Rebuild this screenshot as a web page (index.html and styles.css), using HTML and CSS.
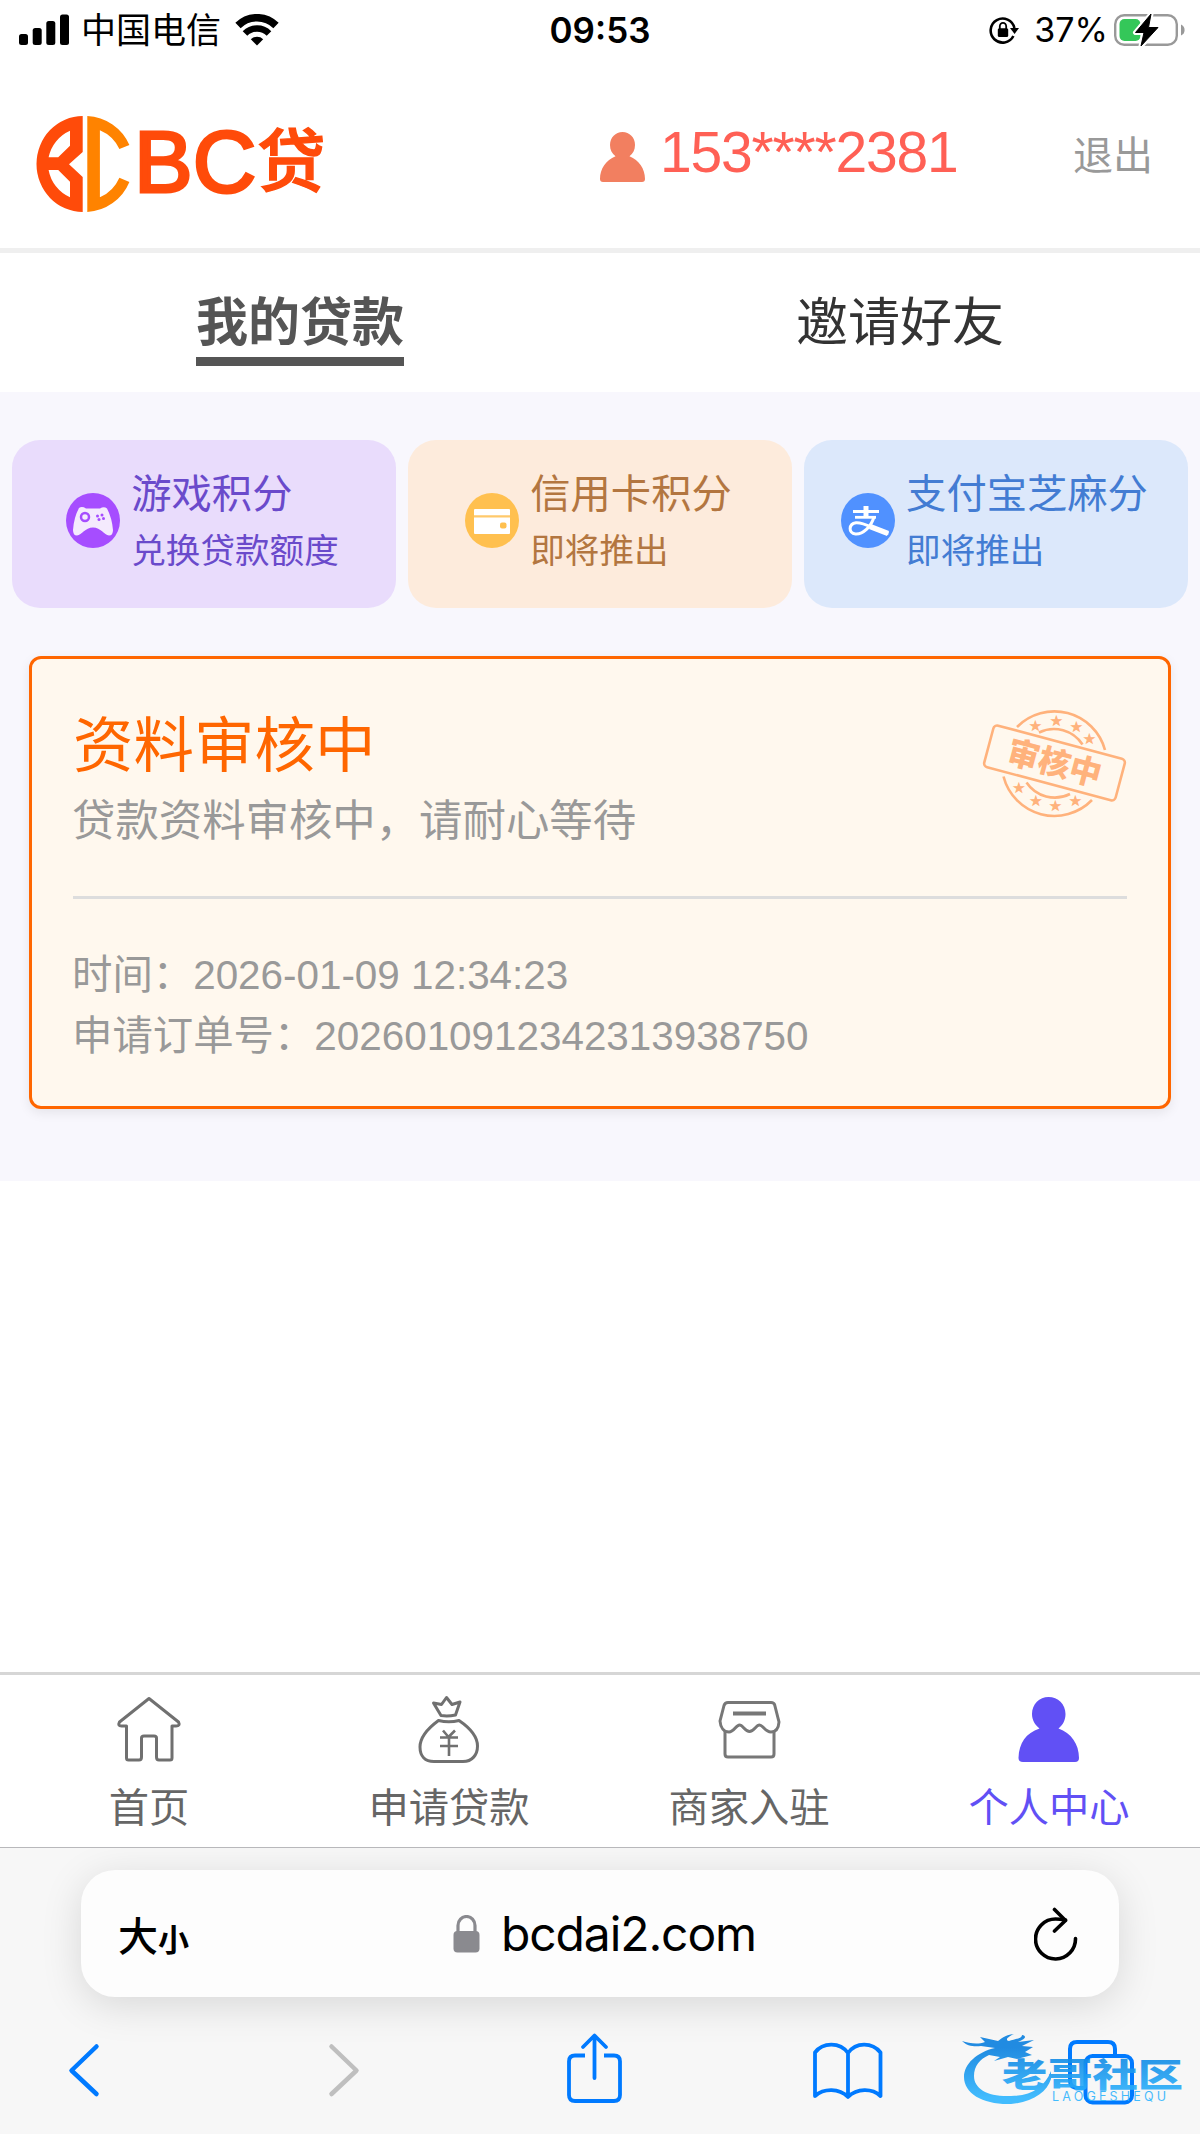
FILE: index.html
```html
<!DOCTYPE html>
<html lang="zh-CN">
<head>
    <meta charset="UTF-8">
    <meta name="viewport" content="width=device-width, initial-scale=1.0">
    <title>BC贷 - 个人中心</title>
    <link rel="stylesheet" href="styles.css">
</head>
<body>

    <!-- 状态栏 -->
    <div class="status">
        <div class="status-left">
            <svg width="50" height="32" viewBox="0 0 50 32">
                <rect x="0" y="20" width="9" height="11" rx="2.5"/>
                <rect x="13.7" y="14" width="9" height="17" rx="2.5"/>
                <rect x="27.3" y="7" width="9" height="24" rx="2.5"/>
                <rect x="41" y="0.5" width="9" height="30.5" rx="2.5"/>
            </svg>
            <span class="carrier">中国电信</span>
            <svg class="wifi" width="44" height="32" viewBox="0 0 44 32">
                <path d="M3 11.5A27 27 0 0 1 41 11.5" fill="none" stroke="#000" stroke-width="7.5"/>
                <path d="M10 19.5A17 17 0 0 1 34 19.5" fill="none" stroke="#000" stroke-width="6.5"/>
                <path d="M22 31.5L15.8 25.3A9 9 0 0 1 28.2 25.3Z"/>
            </svg>
        </div>
        <div class="clock">09:53</div>
        <div class="status-right">
            <svg width="30" height="28" viewBox="0 0 30 28">
                <path d="M24.4 20A12 12 0 1 1 25.4 12" fill="none" stroke="#000" stroke-width="2.6"/>
                <path d="M21 12H30L25.6 18Z"/>
                <rect x="8.8" y="12.3" width="10.4" height="8.7" rx="1.5"/>
                <path d="M10.8 13V10.5a3.2 3.6 0 0 1 6.4 0V13" fill="none" stroke="#000" stroke-width="1.8"/>
            </svg>
            <span class="percent">37%</span>
            <svg width="72" height="36" viewBox="0 0 72 36">
                <rect x="1.2" y="3.2" width="61.6" height="29.6" rx="9" fill="none" stroke="#999" stroke-width="2.4"/>
                <path d="M67 12.5q3.6 1.5 3.6 5.5t-3.6 5.5z" fill="#999"/>
                <rect x="5.5" y="7" width="21" height="22" rx="5" fill="#34c759"/>
                <path d="M37 2L21.5 20.5H30L27 34L44 15.5H34.5Z" stroke="#fff" stroke-width="5" stroke-linejoin="round"/>
                <path d="M37 2L21.5 20.5H30L27 34L44 15.5H34.5Z" stroke="#000" stroke-width="1" stroke-linejoin="round"/>
            </svg>
        </div>
    </div>

    <!-- 顶部 -->
    <div class="header">
        <svg class="logo" width="95" height="98" viewBox="36 115 95 98">
            <path fill="#ff4b0a" fill-rule="evenodd" d="M82.7 116V152L69 164.3L82.7 177V212A46.2 48 0 0 1 82.7 116ZM70 130.7A37 37 0 0 0 48.6 157.3H58.2L70 145.7ZM48.6 170A37 37 0 0 0 70 197.3V181.7L58.2 170Z"/>
            <path fill="#ff8300" d="M87.3 116A48.5 48.5 0 0 1 129.4 145L119.4 149A38 38 0 0 0 99.9 130.3V197.3A38 38 0 0 0 119.4 177.7L129.4 182A48.5 48.5 0 0 1 87.3 212Z"/>
        </svg>
        <div class="brand">BC<span>贷</span></div>
        <svg class="user-icon" width="45" height="50" viewBox="0 0 45 50">
            <path fill="#f27f60" d="M22.5 0C29.500 0 35 5.500 35 13C35 18 33 21.500 29.500 24.300C39 28 45 37 45 47Q45 50 42 50H3Q0 50 0 47C0 37 6 28 15.500 24.300C12 21.500 10 18 10 13C10 5.500 15.500 0 22.500 0Z"/>
        </svg>
        <div class="phone">153****2381</div>
        <div class="logout">退出</div>
    </div>

    <div class="tabs">
        <div class="tab"><span class="active">我的贷款</span></div>
        <div class="tab"><span>邀请好友</span></div>
    </div>

    <div class="main">
        <!-- 积分 -->
        <div class="scores">
            <div class="score game">
                <svg width="54" height="55" viewBox="0 0 54 55">
                    <ellipse cx="27" cy="27.500" rx="27" ry="27.500" fill="#a64dff"/>
                    <path fill="#f4eafd" d="M13 15Q16 13 20 15.500H34Q38 13 41 15.500Q46 25 47 37Q47 42.500 43 42.500C38 42 35 34.500 27 34.500S16 42 11 42.500Q7 42.500 7 37Q8 24 13 15Z"/>
                    <circle cx="19" cy="24" r="4" fill="none" stroke="#a64dff" stroke-width="2.500"/>
                    <g fill="#a64dff"><circle cx="31.500" cy="23" r="1.500"/><circle cx="36" cy="22" r="1.500"/><circle cx="33" cy="26.500" r="1.500"/><circle cx="37.500" cy="25.500" r="1.500"/></g>
                </svg>
                <div><p class="name">游戏积分</p><p class="desc">兑换贷款额度</p></div>
            </div>
            <div class="score credit">
                <svg width="54" height="55" viewBox="0 0 54 55">
                    <ellipse cx="27" cy="27.500" rx="27" ry="27.500" fill="#ffc04f"/>
                    <rect x="9" y="16" width="36" height="25" rx="1" fill="#fff"/>
                    <path d="M9 23.300H45" stroke="#ffc96b" stroke-width="2.200"/>
                    <rect x="35" y="29.500" width="6.500" height="6" rx="2" fill="#ffc04f"/>
                </svg>
                <div><p class="name">信用卡积分</p><p class="desc">即将推出</p></div>
            </div>
            <div class="score alipay">
                <svg width="54" height="55" viewBox="0 0 54 55">
                    <ellipse cx="27" cy="27.500" rx="27" ry="27.500" fill="#5091ff"/>
                    <g fill="none" stroke="#fff">
                        <path d="M12 18.500H38" stroke-width="3"/>
                        <path d="M25 13V24" stroke-width="5"/>
                        <path d="M14 24.300H35" stroke-width="2.800"/>
                        <path d="M33 24C30 34 22 41.500 14.500 41C7 40 7.500 31 15 29.800C24 29 33 37 47.500 40.500" stroke-width="3"/>
                        <path d="M29 33.500L47 40.500" stroke-width="5.500"/>
                    </g>
                </svg>
                <div><p class="name">支付宝芝麻分</p><p class="desc">即将推出</p></div>
            </div>
        </div>

        <!-- 贷款订单 -->
        <div class="loan">
            <div class="loan-top">
                <div>
                    <h2>资料审核中</h2>
                    <p class="tip">贷款资料审核中，请耐心等待</p>
                </div>
                <svg class="stamp" width="145" height="110" viewBox="0 0 145 110">
                    <g fill="none" stroke="#ffb27c" stroke-width="2.600">
                        <path d="M35 18A52.500 52.500 0 0 1 123 41"/>
                        <path d="M21.500 67.500A52.500 52.500 0 0 0 110 91"/>
                        <path d="M57 23.500A34 34 0 0 1 100.500 35.500"/>
                        <path d="M44.500 73.500A34 34 0 0 0 88 85"/>
                        <rect x="4.500" y="32.500" width="136" height="43" rx="4" transform="rotate(15 72.500 54)"/>
                    </g>
                    <g fill="#ffb27c" font-size="12" text-anchor="middle" font-family="DejaVu Sans" stroke="#ffb27c">
                        <text x="53.500" y="20.500">★</text><text x="74.500" y="16">★</text><text x="94.500" y="21.500">★</text><text x="107.500" y="34">★</text>
                        <text x="37" y="82.500">★</text><text x="54" y="96">★</text><text x="73.500" y="100.500">★</text><text x="93.500" y="96">★</text>
                    </g>
                    <text class="stamp-text" x="72.500" y="65.500" text-anchor="middle" transform="rotate(15 72.500 54)">审核中</text>
                </svg>
            </div>
            <div class="loan-info">
                <p>时间：2026-01-09 12:34:23</p>
                <p>申请订单号：2026010912342313938750</p>
            </div>
        </div>
    </div>

    <!-- 底部导航 -->
    <div class="nav">
        <div class="nav-item">
            <svg width="72" height="72" viewBox="0 0 72 72" fill="none" stroke="#707070" stroke-width="3" stroke-linejoin="round">
                <path d="M36 4.500L65.500 28Q67.500 32 63 32H59V64Q59 66 57 66H46Q43.500 66 43.500 63V44Q43.500 42 41 42H31Q28.500 42 28.500 44V63Q28.500 66 26 66H15.500Q13.500 66 13.500 64V32H8.500Q4.500 32 6.500 28Z"/>
            </svg>
            <span>首页</span>
        </div>
        <div class="nav-item">
            <svg width="72" height="72" viewBox="0 0 72 72" fill="none" stroke="#707070" stroke-width="3" stroke-linejoin="round">
                <path d="M28 21.500L20.500 9L28.500 10.500L33.500 3.500L39 10.500L47 8L42.500 21Q35 22.500 28 21.500Z"/>
                <path d="M25.500 26.500C14 35 7 45 7 53C7 62 12 67.500 21 67.500H50C59 67.500 64.500 61 64.500 52C64.500 42 57 34 46 26.500Q36 29 25.500 26.500Z"/>
                <path d="M30 36.500L35.500 43L42 36.500M27 43.500H45M27 52H45M36 43V62" stroke-width="2.600"/>
            </svg>
            <span>申请贷款</span>
        </div>
        <div class="nav-item">
            <svg width="72" height="72" viewBox="0 0 72 72" fill="none" stroke="#777" stroke-width="3" stroke-linejoin="round">
                <path d="M15 8.500H58Q61 8.500 61.700 11L66 28C65.500 35 62 38 58 38C52 38 50 31 46.500 31C43 31 41 37.500 36.500 37.500S30 31 26.500 31C23 31 21 38 16 38C11 38 7.500 34 7 27L11 11.500Q12 8.500 15 8.500Z"/>
                <path d="M12 37V60Q12 63 15 63H58Q61 63 61 60V37"/>
                <path d="M20 19.500H53" stroke-width="4"/>
            </svg>
            <span>商家入驻</span>
        </div>
        <div class="nav-item active">
            <svg width="72" height="72" viewBox="0 0 72 72">
                <path fill="#6150f5" d="M35.500 3C45 3 52.500 10 52.500 20C52.500 26 50 31 45.500 34.500C58 39 66 50 66 64Q66 68 62 68H10Q5.500 68 5.500 64C6 49 13 39 26.500 34.500C22 31 19 26 19 20C19 10 26.500 3 35.500 3Z"/>
            </svg>
            <span>个人中心</span>
        </div>
    </div>

    <!-- 浏览器工具栏 -->
    <div class="browser">
        <div class="address">
            <div class="aa">大<small>小</small></div>
            <div class="url">
                <svg width="27" height="38" viewBox="0 0 27 38">
                    <rect x="0.500" y="16" width="26" height="21.500" rx="4" fill="#8a8a8f"/>
                    <path d="M5 17V10.500a8.500 9 0 0 1 17 0V17" fill="none" stroke="#8a8a8f" stroke-width="3.200"/>
                </svg>
                <span>bcdai2.com</span>
            </div>
            <svg width="44" height="54" viewBox="0 0 44 54" fill="none" stroke="#000" stroke-width="3.600" stroke-linecap="round" stroke-linejoin="round">
                <path d="M41.500 31.500A20 20 0 1 1 21.500 12Q26 12 31.500 13"/>
                <path d="M20.500 2.500L31.500 13.500L20.500 24"/>
            </svg>
        </div>
        <div class="toolbar">
            <svg width="80" height="80" viewBox="0 0 80 80" fill="none" stroke="#007aff" stroke-width="4.500" stroke-linecap="round" stroke-linejoin="round">
                <path d="M52.500 16.500L27.500 40.500L52.500 64"/>
            </svg>
            <svg width="80" height="80" viewBox="0 0 80 80" fill="none" stroke="#bfbfbf" stroke-width="4.500" stroke-linecap="round" stroke-linejoin="round">
                <path d="M27.500 16.500L52.500 40.500L27.500 64"/>
            </svg>
            <svg width="80" height="80" viewBox="0 0 80 80" fill="none" stroke="#007aff" stroke-width="3.800" stroke-linecap="round" stroke-linejoin="round">
                <path d="M31 25.500H21Q15 25.500 15 31.500V65Q15 71 21 71H60Q66 71 66 65V31.500Q66 25.500 60 25.500H50" stroke-linecap="butt"/>
                <path d="M40.500 48V6M29 17L40.500 5.500L52 17"/>
            </svg>
            <svg width="80" height="80" viewBox="0 0 80 80" fill="none" stroke="#007aff" stroke-width="3.800" stroke-linejoin="round">
                <path d="M40 23C32 12 15 12 7 22.500V66C16 58 31 58 40 67C49 58 64 58 72.500 66V22.500C64 12 48 12 40 23ZM40 23V67"/>
            </svg>
            <svg width="80" height="80" viewBox="0 0 80 80" fill="none" stroke="#007aff" stroke-width="4">
                <path d="M23 58H18Q9 58 9 51V19Q9 12 16 12H47Q54 12 54 19V26"/>
                <rect x="24.500" y="26" width="46.500" height="46.500" rx="7"/>
            </svg>
        </div>
    </div>

    <!-- 水印 -->
    <svg class="watermark" width="230" height="84" viewBox="0 0 230 84">
        <defs>
            <linearGradient id="wm" x1="0" y1="20" x2="0" y2="70" gradientUnits="userSpaceOnUse">
                <stop offset="0" stop-color="#0a80df"/>
                <stop offset="1" stop-color="#2fb6ff"/>
            </linearGradient>
        </defs>
        <g fill="url(#wm)">
            <path d="M35 20C17 24 4 36 4 49C4 66 24 77 51 76C73 74 87 64 91 51V43C85 59 71 68 51 68C28 69 14 61 14 48C14 38 20 31 29 27L40 29L34 33L48 29L57 31L72 27L65 24L73 19L62 18L74 12L58 14C66 11 67 8 62 7C62 11 54 11 49 13C44 12 49 8 54 6C44 7 41 11 38 13L20 9L25 14C17 17 9 15 2 13C7 18 14 19 21 18Z"/>
            <text class="wm-text" x="42" y="59" textLength="181" lengthAdjust="spacingAndGlyphs">老哥社区</text>
            <text class="wm-sub" x="92" y="72.500" textLength="114">LAOGESHEQU</text>
        </g>
    </svg>

</body>
</html>
```

FILE: styles.css
```css
* { box-sizing: border-box; }
body { margin: 0; width: 1200px; height: 2134px; position: relative; display: flex; flex-direction: column; background: #fff; overflow: hidden; font-family: "Liberation Sans", "Noto Sans CJK SC", sans-serif; }
p, h2 { margin: 0; font-weight: normal; }
svg { display: block; flex: none; }

/* 状态栏 */
.status { height: 60px; display: grid; grid-template-columns: 1fr 120px 1fr; align-items: center; padding: 0 14px 0 19px; font-family: Inter, "Noto Sans CJK SC", sans-serif; }
.status-left, .status-right { display: flex; align-items: center; height: 60px; }
.status-right { justify-content: flex-end; }
.carrier { margin: 0 14px 0 12px; font-size: 35px; line-height: 60px; }
.clock { padding-right: 5px; font-size: 35px; font-weight: 600; text-align: center; line-height: 60px; }
.percent { margin: 0 6px 0 15px; font-size: 34px; line-height: 60px; }

/* 顶部 */
.header { height: 193px; display: flex; align-items: flex-start; padding-left: 36px; border-bottom: 5px solid #efefef; }
.logo { margin-top: 55px; }
.brand { width: 200px; margin-left: 3px; margin-top: 52px; font-size: 88px; line-height: 100px; color: #ff4b0a; white-space: nowrap; -webkit-text-stroke: 3px #ff4b0a; }
.brand span { font-size: 68px; font-weight: 500; line-height: 1; vertical-align: 6px; margin-left: 1px; -webkit-text-stroke-width: 1.5px; }
.user-icon { margin: 72px 0 0 266px; }
.phone { margin: 60px 0 0 15px; width: 413px; font-size: 57px; line-height: 64px; letter-spacing: -1.2px; color: #ff6055; }
.logout { margin-top: 66px; font-size: 40px; line-height: 60px; color: #999; white-space: nowrap; }

.tabs { height: 139px; display: flex; }
.tab { flex: 1; text-align: center; font-size: 52px; color: #333; }
.tab span { display: inline-block; height: 77px; margin-top: 36px; line-height: 68px; }
.tab .active { font-weight: bold; color: #555; border-bottom: 9px solid #555; }

.main { height: 789px; padding: 48px 12px 0; background: #f8f7fd; }
.scores { display: grid; grid-template-columns: repeat(3, 1fr); gap: 12px; }
.score { height: 168px; display: flex; align-items: center; justify-content: center; gap: 11px; border-radius: 28px; padding: 0 3px 7px 0; }
.score svg { margin-top: -1px; }
.name { font-size: 40.3px; line-height: 60px; }
.desc { font-size: 34.6px; line-height: 52px; }
.game { background: #e9dcfc; color: #6a4acb; }
.credit { background: #fdebdc; color: #b37640; }
.alipay { background: #dce8fb; color: #437cd3; }

/* 贷款订单 */
.loan { height: 453px; margin: 48px 17px 0; padding: 0 41px; background: #fff8ee; border: 3px solid #ff6600; border-radius: 12px; box-shadow: 0 4px 12px rgba(0, 0, 0, 0.08); }
.loan-top { display: flex; justify-content: space-between; height: 240px; padding-top: 45px; border-bottom: 3px solid #ddd; }
.loan h2 { font-size: 60.5px; line-height: 84px; color: #ff6600; }
.tip { font-size: 43.4px; line-height: 66px; color: #999; margin-left: -1px; }
.stamp { margin-top: 5px; }
.stamp-text { font-family: "Noto Sans CJK SC", sans-serif; font-size: 32px; font-weight: 900; fill: #ffb27c; }
.loan-info { padding-top: 46px; font-size: 40.4px; line-height: 61px; color: #999; margin-left: -1px; }

/* 底部导航 */
.nav { margin-top: 491px; height: 175px; display: flex; border-top: 3px solid #d6d6d6; }
.nav-item { flex: 1; display: flex; flex-direction: column; align-items: center; padding: 19px 2px 0 0; font-size: 40.3px; line-height: 60px; color: #666; }
.nav-item svg { margin-bottom: 13px; }
.nav-item.active { color: #6150f5; }

/* 浏览器 */
.browser { flex: 1; padding: 22px 81px 0 81px; background: #f7f7f7; border-top: 1px solid #b8b8bb; overflow: hidden; }
.address { height: 127px; display: flex; align-items: center; justify-content: space-between; padding: 0 41px 0 37px; border-radius: 34px; background: #fdfdfd; box-shadow: 0 8px 40px rgba(0, 0, 0, 0.13); font-family: Inter, "Noto Sans CJK SC", sans-serif; }
.aa { width: 75px; font-size: 40px; font-weight: 500; white-space: nowrap; }
.aa small { font-size: 31px; font-weight: 700; }
.url { display: flex; align-items: center; gap: 21px; margin-right: 18px; font-size: 48px; letter-spacing: -1.1px; }
.toolbar { display: grid; grid-template-columns: 260px 250px 254px 253px 80px; margin: 33px 0 0 -37px; }
.watermark { position: absolute; left: 960px; top: 2028px; opacity: 0.9; }
.wm-text { font-family: "Noto Sans CJK SC", sans-serif; font-size: 33px; font-weight: 900; }
.wm-sub { font-family: Inter, sans-serif; font-size: 12.5px; }
```
